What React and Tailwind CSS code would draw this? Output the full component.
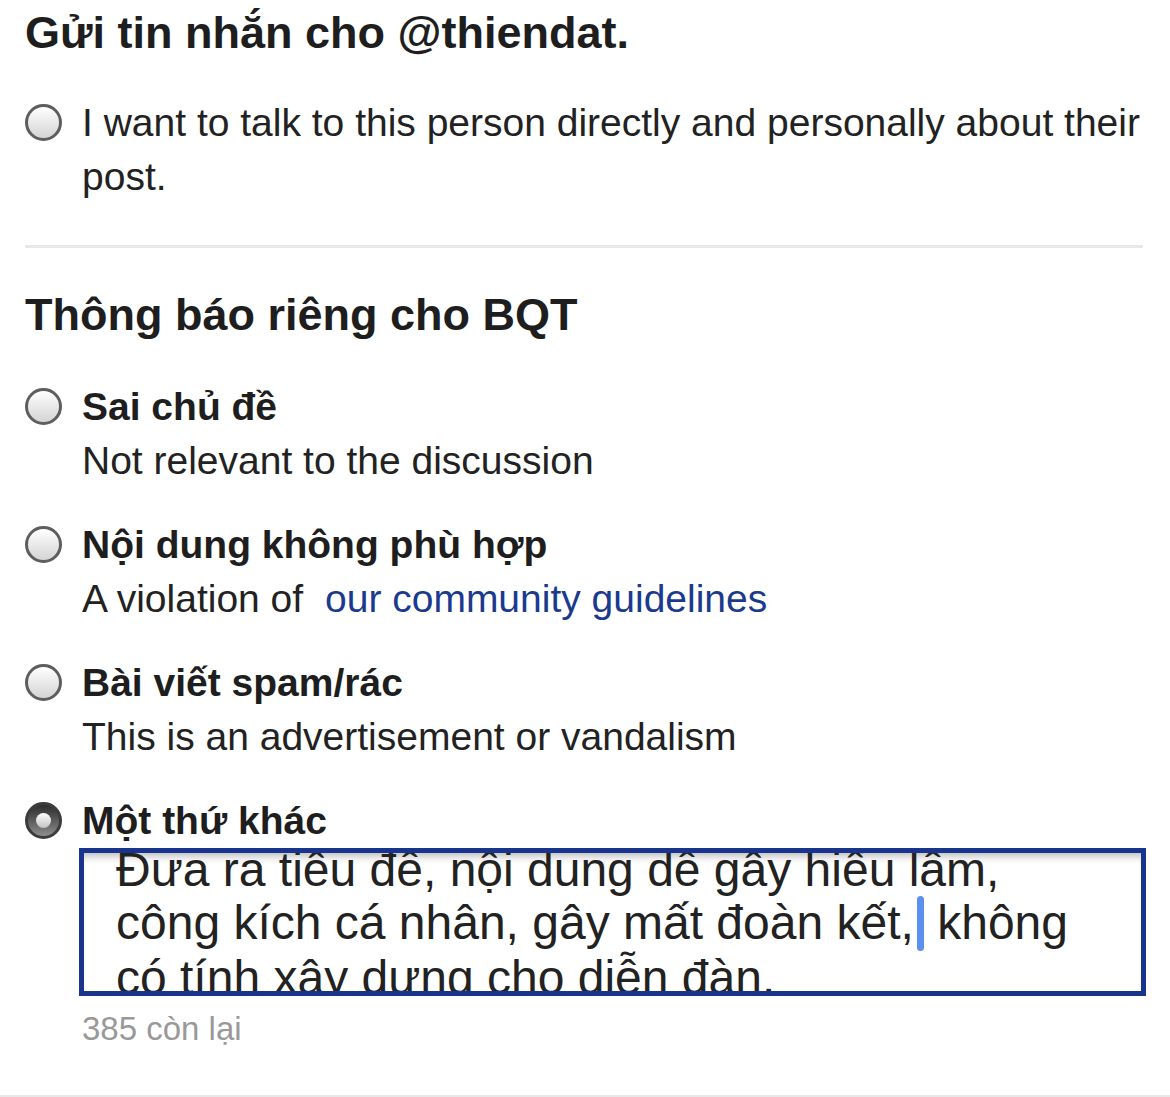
const Radio = ({ checked }) =>
  checked ? (
    <span className="mt-[8px] flex h-[37px] w-[37px] shrink-0 items-center justify-center rounded-full border-[3px] border-[#3c3c3c] bg-linear-to-b from-[#2e2e2e] to-[#8e8e8e]">
      <span className="h-[15px] w-[15px] rounded-full bg-linear-to-b from-white to-[#c4c4c4]" />
    </span>
  ) : (
    <span className="mt-[8px] h-[37px] w-[37px] shrink-0 rounded-full border-[3px] border-[#5e5e5e] bg-linear-to-b from-white to-[#d4d4d4]" />
  )

const options = [
  { title: 'Sai chủ đề', desc: 'Not relevant to the discussion' },
  {
    title: 'Nội dung không phù hợp',
    desc: (
      <>
        A violation of{' '}
        <a href="#" className="ml-[11px] text-[#1b3a8e]">
          our community guidelines
        </a>
      </>
    )
  },
  { title: 'Bài viết spam/rác', desc: 'This is an advertisement or vandalism' }
]

export default function App() {
  return (
    <div className="h-[1097px] w-[1170px] overflow-hidden bg-white font-['Liberation_Sans',Arial,sans-serif] text-[#222]">
      <div className="pl-[25px] pr-[24px] pt-[6px]">
        <h1 className="text-[45px] font-bold leading-[54px] text-[#1e1e1e]">Gửi tin nhắn cho @thiendat.</h1>

        <label className="mt-[36px] flex gap-[20px]">
          <Radio />
          <span className="text-[39px] leading-[54px]">
            I want to talk to this person directly and personally about their post.
          </span>
        </label>

        <div className="mr-[3px] mt-[41px] h-[3px] bg-[#e8e8e8]" />

        <h2 className="mt-[40px] text-[45px] font-bold leading-[54px] text-[#1e1e1e]">Thông báo riêng cho BQT</h2>

        <div className="mt-[38px] flex flex-col gap-[30px]">
          {options.map((o) => (
            <label key={o.title} className="flex gap-[20px]">
              <Radio />
              <div className="text-[39px] leading-[54px]">
                <div className="font-bold text-[#1e1e1e]">{o.title}</div>
                <div>{o.desc}</div>
              </div>
            </label>
          ))}
          <div>
            <label className="flex gap-[20px]">
              <Radio checked />
              <div className="text-[39px] font-bold leading-[54px] text-[#1e1e1e]">Một thứ khác</div>
            </label>
            <div className="ml-[54px] h-[148px] overflow-hidden border-[5px] border-[#19348c] shadow-[inset_0_9px_8px_-6px_rgba(0,0,0,0.28)]">
              <p className="-mt-[10px] pl-[32px] pr-[35px] text-[48px] leading-[53px] text-[#222]">
                Đưa ra tiêu đề, nội dung dễ gây hiểu lầm, công kích cá nhân, gây mất đoàn kết,
                <span className="ml-[3px] inline-block h-[55px] w-[7px] rounded-full bg-[#5b8ff0] align-top" /> không có
                tính xây dựng cho diễn đàn.
              </p>
            </div>
          </div>
        </div>

        <p className="ml-[57px] mt-[13px] text-[33px] leading-[40px] text-[#999]">385 còn lại</p>
      </div>
      <div className="mt-[46px] h-[3px] bg-[#e8e8e8]" />
    </div>
  )
}
